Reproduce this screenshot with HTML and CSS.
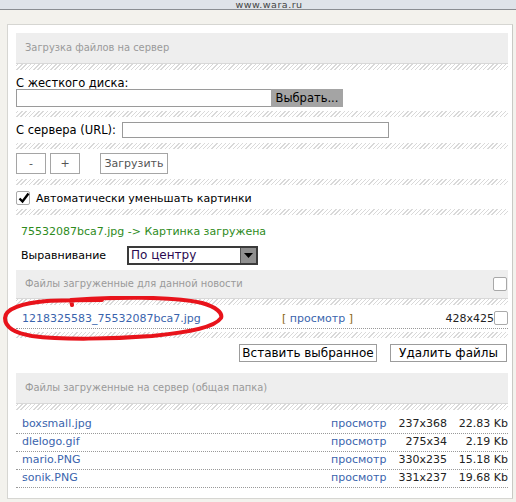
FILE: index.html
```html
<!DOCTYPE html>
<html lang="ru">
<head>
<meta charset="utf-8">
<link rel="stylesheet" href="styles.css">
</head>
<body>
<div class="topbar"><span>www.wara.ru</span></div>
<div class="page">
  <div class="panel">
    <div class="head">Загрузка файлов на сервер</div>
    <div class="hatch"></div>
    <div class="label">С жесткого диска:</div>
    <div class="filerow"><span class="fileinput"></span><span class="filebtn">Выбрать...</span></div>
    <div class="hatch"></div>
    <div class="urlrow"><span>С сервера (URL):</span><span class="urlinput"></span></div>
    <div class="hatch"></div>
    <div class="btnrow"><span class="sbtn small">-</span><span class="sbtn small">+</span><span class="sbtn upload">Загрузить</span></div>
    <div class="hatch"></div>
    <div class="checkrow"><span class="cbox checked"><svg width="14" height="14" viewBox="0 0 14 14"><path d="M2.5 7.5 L5.5 10.5 L11.5 2.5" fill="none" stroke="#000" stroke-width="2.4"/></svg></span><span>Автоматически уменьшать картинки</span></div>
    <div class="hatch"></div>
    <div class="status">75532087bca7.jpg -&gt; Картинка загружена</div>
    <div class="alignrow"><span class="alabel">Выравнивание</span><span class="select"><span class="seltext">По центру</span><span class="selbtn"><svg width="9" height="5" viewBox="0 0 9 5"><path d="M0 0 H9 L4.5 5 Z" fill="#000"/></svg></span></span></div>
    <div class="head head2"><span>Файлы загруженные для данной новости</span><span class="cbox"></span></div>
    <div class="hatch"></div>
    <div class="newsrow"><a class="link">1218325583_75532087bca7.jpg</a><span class="view"><b>[</b> просмотр <b>]</b></span><span class="dim">428x425</span><span class="cbox"></span></div>
    <div class="hatch"></div>
    <div class="actions"><span class="abtn">Вставить выбранное</span><span class="abtn">Удалить файлы</span></div>
    <div class="head head3">Файлы загруженные на сервер (общая папка)</div>
    <div class="hatch"></div>
    <div class="list">
      <div class="lrow"><a class="link">boxsmall.jpg</a><span class="lview">просмотр</span><span class="num">237x368</span><span class="num">22.83 Kb</span></div>
      <div class="lrow"><a class="link">dlelogo.gif</a><span class="lview">просмотр</span><span class="num">275x34</span><span class="num">2.19 Kb</span></div>
      <div class="lrow"><a class="link">mario.PNG</a><span class="lview">просмотр</span><span class="num">330x235</span><span class="num">15.18 Kb</span></div>
      <div class="lrow"><a class="link">sonik.PNG</a><span class="lview">просмотр</span><span class="num">331x237</span><span class="num">19.68 Kb</span></div>
    </div>
  </div>
</div>
<svg class="scribble" width="230" height="50" viewBox="0 0 230 50"><path d="M70 9 L69 4 C110 1 170 0 200 7 C214 11 221 17 219 22 C213 31 190 36 150 40 C110 43 60 44 30 40 C12 37 3 31 3 22 C3 13 20 7 45 5 C60 4 80 4 100 4" fill="none" stroke="#e8131b" stroke-width="4" stroke-linecap="round" stroke-linejoin="round"/></svg>
</body>
</html>
```

FILE: styles.css
```css
html, body { margin: 0; padding: 0; }
body {
  font-family: "DejaVu Sans", Verdana, sans-serif;
  font-size: 11px;
  color: #000;
  background: #f3f2ed;
  width: 516px;
  height: 502px;
  overflow: hidden;
  position: relative;
}
.topbar {
  height: 9px;
  background: #dfe3e9;
  border-bottom: 1px solid #8a8d92;
  text-align: center;
}
.topbar span {
  display: block;
  font-size: 9.5px;
  line-height: 9px;
  height: 9px;
  color: #444;
  padding-left: 22px;
  letter-spacing: 0.5px;
}
.page {
  padding: 14px 3px 0 7px;
}
.panel {
  background: #fff;
  border: 1px solid #d6d6d2;
  border-right-color: #c9c9c4;
  padding: 8px 4px 10px 8px;
}
.head {
  background: #eeeeee;
  height: 30px;
  line-height: 30px;
  padding-left: 9px;
  color: #9a9a9a;
  font-family: "DejaVu Sans Condensed", "DejaVu Sans", sans-serif;
  font-size: 11px;
  border-bottom: 1px solid #d8d8d8;
}
.hatch {
  height: 6px;
  background: repeating-linear-gradient(135deg, #fff 0 1px, #d9d9d9 1px 2px, #fff 2px 3px);
}
.label {
  margin-top: 7px;
  height: 12px;
  line-height: 12px;
  font-size: 11.5px;
}
.filerow {
  display: flex;
  height: 18px;
  margin-bottom: 4px;
}
.fileinput {
  width: 255px;
  border: 1px solid #9a9a9a;
  border-right: none;
  box-sizing: border-box;
  height: 18px;
}
.filebtn {
  width: 72px;
  background: #a4a4a4;
  height: 18px;
  line-height: 18px;
  text-align: center;
  font-size: 11.5px;
}
.urlrow {
  display: flex;
  align-items: center;
  height: 16px;
  margin: 5px 0 5px;
  font-size: 11.5px;
}
.urlinput {
  margin-left: 6px;
  width: 267px;
  height: 16px;
  box-sizing: border-box;
  border: 1px solid #9a9a9a;
}
.btnrow {
  display: flex;
  margin: 4px 0 5px;
  height: 21px;
}
.sbtn {
  border: 1px solid #a5a5a5;
  box-sizing: border-box;
  height: 21px;
  line-height: 19px;
  text-align: center;
  color: #555;
  font-size: 11px;
}
.small { width: 30px; margin-right: 4px; }
.upload { width: 68px; margin-left: 16px; }
.checkrow {
  display: flex;
  align-items: center;
  height: 14px;
  margin: 6px 0 4px;
  font-size: 11px;
  gap: 6px;
}
.cbox {
  display: inline-block;
  width: 14px;
  height: 14px;
  box-sizing: border-box;
  border: 1px solid #aaa;
  border-radius: 2px;
  background: #fff;
  flex: none;
}
.cbox.checked { position: relative; }
.cbox svg { position: absolute; left: 0; top: -1px; }
.status {
  color: #2e8b1c;
  margin: 10px 0 0 5px;
  height: 13px;
  line-height: 13px;
  font-size: 11px;
}
.alignrow {
  display: flex;
  align-items: center;
  margin-top: 8px;
  height: 18px;
  padding-left: 5px;
}
.alabel { width: 106px; font-size: 11px; }
.select {
  display: flex;
  width: 131px;
  height: 19px;
  box-sizing: border-box;
  border: 2px solid #3a3a3a;
  background: #fff;
}
.seltext { flex: 1; color: #2a0a50; line-height: 15px; padding-left: 2px; font-size: 12px; }
.selbtn {
  width: 15px;
  background: #8f8f8f;
  border-left: 1px solid #555;
  display: flex;
  align-items: center;
  justify-content: center;
}
.head2 {
  margin-top: 6px;
  height: 28px;
  line-height: 28px;
  display: flex;
  justify-content: space-between;
  align-items: center;
  padding-right: 1px;
}
.head2 .cbox { border-color: #a8a8a8; }
.newsrow {
  display: flex;
  align-items: center;
  height: 21px;
  margin: 3px 0 3px;
  border-bottom: 1px dotted #999;
  padding-left: 6px;
  box-sizing: border-box;
}
.link { color: #3a64ad; text-decoration: none; font-size: 11px; }
.newsrow .link { width: 260px; }
.view { color: #3a64ad; width: 71px; }
.view b { color: #8a6510; font-weight: normal; }
.dim { flex: 1; text-align: right; color: #222; }
.actions {
  display: flex;
  justify-content: flex-end;
  gap: 13px;
  margin-top: 6px;
  margin-right: 1px;
}
.abtn {
  border: 1px solid #9c9c9c;
  height: 18px;
  box-sizing: border-box;
  line-height: 16px;
  font-size: 12px;
  text-align: center;
}
.abtn:first-child { width: 138px; }
.abtn:last-child { width: 117px; }
.head3 { margin-top: 11px; }
.list { margin-top: 6px; }
.lrow {
  display: grid;
  grid-template-columns: 1fr 54px 62px 61px;
  height: 18px;
  line-height: 16px;
  border-bottom: 1px dotted #999;
  box-sizing: border-box;
}
.lrow .link { padding-left: 6px; }
.lview { color: #3a64ad; }
.num { text-align: right; color: #222; }
.scribble {
  position: absolute;
  left: 2px;
  top: 296px;
}
```
